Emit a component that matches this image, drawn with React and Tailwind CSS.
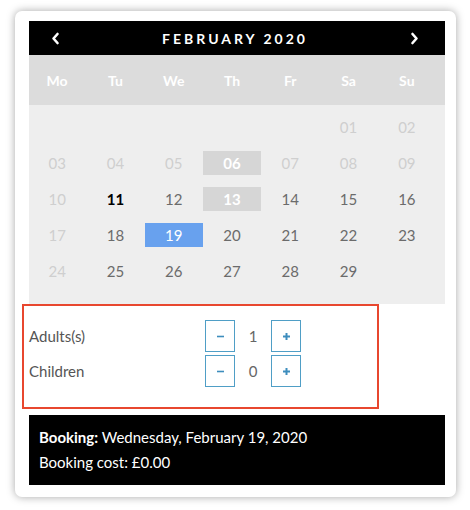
import React from 'react';

const days = ['Mo', 'Tu', 'We', 'Th', 'Fr', 'Sa', 'Su'];

// null = empty slot; state: off | open | booked | today | selected
const cells = [
    null, null, null, null, null, ['01', 'off'], ['02', 'off'],
    ['03', 'off'], ['04', 'off'], ['05', 'off'], ['06', 'booked'], ['07', 'off'], ['08', 'off'], ['09', 'off'],
    ['10', 'off'], ['11', 'today'], ['12', 'open'], ['13', 'booked'], ['14', 'open'], ['15', 'open'], ['16', 'open'],
    ['17', 'off'], ['18', 'open'], ['19', 'selected'], ['20', 'open'], ['21', 'open'], ['22', 'open'], ['23', 'open'],
    ['24', 'off'], ['25', 'open'], ['26', 'open'], ['27', 'open'], ['28', 'open'], ['29', 'open'], null,
];

const cellClass = {
    off: 'text-[#cfcfcf]',
    open: 'text-[#6b6b6b]',
    today: 'text-black font-bold',
    booked: 'bg-[#d6d6d6] text-white font-bold',
    selected: 'bg-[#68a1ee] text-white',
};

const Chevron = ({ dir }) => (
    <svg width="9" height="13" viewBox="0 0 9 13" fill="none">
        <path
            d={dir === 'left' ? 'M6.5 2 L2.5 6.5 L6.5 11' : 'M2.5 2 L6.5 6.5 L2.5 11'}
            stroke="white"
            strokeWidth="2.6"
            strokeLinecap="round"
            strokeLinejoin="round"
        />
    </svg>
);

const Sign = ({ plus }) => (
    <svg width="9" height="9" viewBox="0 0 9 9">
        <path d="M1 4.5 H8" stroke="#3d8dbd" strokeWidth={plus ? 2 : 1.6} />
        {plus && <path d="M4.5 1 V8" stroke="#3d8dbd" strokeWidth="2" />}
    </svg>
);

const Counter = ({ label, value }) => (
    <div className="flex items-center h-[32px]">
        <span className="w-[176px] text-[15px] text-[#555]">{label}</span>
        <button className="w-[30px] h-[32px] border border-[#4f9ec6] flex items-center justify-center">
            <Sign />
        </button>
        <span className="w-[36px] text-center text-[15px] text-[#666]">{value}</span>
        <button className="w-[30px] h-[32px] border border-[#4f9ec6] flex items-center justify-center">
            <Sign plus />
        </button>
    </div>
);

export default function App() {
    return (
        <div className="min-h-[510px] bg-white pt-[11px] pl-[15px]" style={{ fontFamily: 'Lato, "Open Sans", sans-serif' }}>
            <div className="w-[441px] bg-white rounded-[7px] shadow-[0_0_9px_rgba(0,0,0,0.35)] pt-[10px] pl-[14px] pr-[11px] pb-[12px]">
                {/* Month header */}
                <div className="h-[34px] bg-black flex items-center justify-between pl-[22px] pr-[26px]">
                    <Chevron dir="left" />
                    <span className="text-white text-[14px] font-bold tracking-[3px]">FEBRUARY 2020</span>
                    <Chevron dir="right" />
                </div>

                {/* Weekday names */}
                <div className="h-[50px] bg-[#dcdcdc] flex items-center">
                    <div className="grid grid-cols-7 w-[408px] -ml-[1px]">
                        {days.map((d) => (
                            <span key={d} className="text-center text-white text-[14px] font-bold">{d}</span>
                        ))}
                    </div>
                </div>

                {/* Dates */}
                <div className="bg-[#eeeeee] pt-[10px] pb-[21px]">
                    <div className="grid grid-cols-7 w-[408px] -ml-[1px] gap-y-[12px]">
                        {cells.map((c, i) =>
                            c ? (
                                <span key={i} className={`h-[24px] flex items-center justify-center text-[15px] ${cellClass[c[1]]}`}>
                                    {c[0]}
                                </span>
                            ) : (
                                <span key={i} className="h-[24px]" />
                            )
                        )}
                    </div>
                </div>

                {/* Guests */}
                <div className="-ml-[7px] w-[357px] border-2 border-[#e8472f] pt-[14px] pb-[20px] pl-[5px] flex flex-col gap-[3px]">
                    <Counter label="Adults(s)" value="1" />
                    <Counter label="Children" value="0" />
                </div>

                {/* Summary */}
                <div className="mt-[6px] bg-black text-white text-[15px] pt-[10px] pb-[11px] pl-[10px]">
                    <p className="leading-[24px]"><b>Booking:</b> Wednesday, February 19, 2020</p>
                    <p className="leading-[24px] mt-[1px]">Booking cost: £0.00</p>
                </div>
            </div>
        </div>
    );
}
